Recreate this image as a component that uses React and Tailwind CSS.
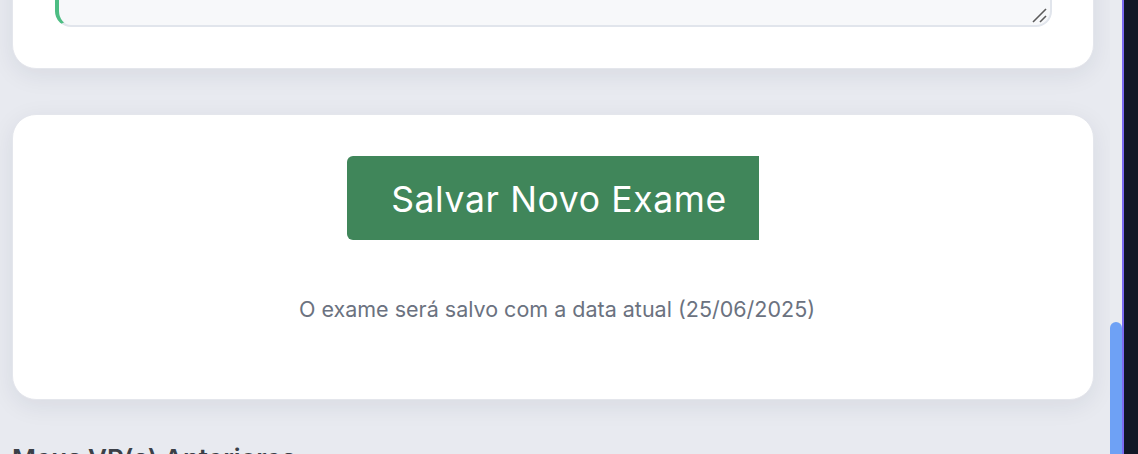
import React from "react";

export default function App() {
  return (
    <div
      className="flex h-[454px] w-[1138px] overflow-hidden bg-[#e8eaf0]"
      style={{ fontFamily: "Inter, 'Noto Sans', sans-serif" }}
    >
      <main className="flex-1 flex flex-col pl-[12px] pr-[16px]">
        {/* first card (continuation) */}
        <section className="shrink-0 -mt-[120px] h-[189px] rounded-[24px] bg-white shadow-[0_6px_24px_rgba(30,40,70,0.08)] border border-[#e4e6ec] pl-[42px] pr-[41px] pt-[20px]">
          <div className="relative">
            <textarea
              className="block w-full h-[126px] resize-none rounded-[16px] border-2 border-[#e1e5ec] border-l-4 border-l-[#4dbd83] bg-[#f7f8fa] outline-none"
              defaultValue=""
            />
            <svg
              className="absolute right-[5px] bottom-[4px]"
              width="16"
              height="16"
              viewBox="0 0 16 16"
            >
              <path d="M2 15 L15 2" stroke="#5b5b5b" strokeWidth="1.6" />
              <path d="M9 15 L15 9" stroke="#5b5b5b" strokeWidth="1.6" />
            </svg>
          </div>
        </section>

        {/* save card */}
        <section className="shrink-0 mt-[45px] h-[286px] rounded-[24px] bg-white shadow-[0_6px_24px_rgba(30,40,70,0.08)] border border-[#e4e6ec] flex flex-col items-center pt-[41px]">
          <button className="h-[84px] w-[412px] shrink-0 rounded-l-[6px] bg-[#40865a] text-white text-[35.5px] tracking-[0.018em] pl-[12px] pt-[3px] leading-none">
            Salvar Novo Exame
          </button>
          <p className="mt-[55px] pl-[8px] text-[21.5px] leading-[28px] text-[#6b7280]">
            O exame será salvo com a data atual (25/06/2025)
          </p>
        </section>

        <h2 className="shrink-0 mt-[46px] text-[26px] font-semibold text-[#3b3f47] leading-none">
          Meus VP(s) Anteriores
        </h2>
      </main>

      {/* scrollbar */}
      <div className="w-[12px] bg-[#e9ebf0] flex flex-col pt-[322px]">
        <div className="flex-1 rounded-t-full bg-[#6ea1f5]" />
      </div>
      <div className="w-[2px] bg-[#7b6cf2]" />
      <div className="w-[14px] bg-[#111827]" />
    </div>
  );
}
